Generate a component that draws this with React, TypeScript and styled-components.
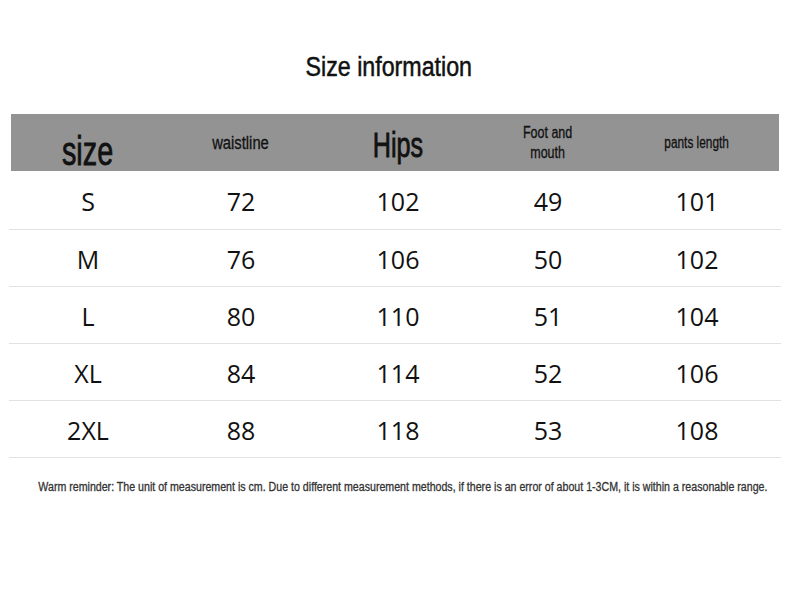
import styled, { createGlobalStyle } from "styled-components";

const GlobalStyle = createGlobalStyle`
  html, body {
    margin: 0;
    padding: 0;
    background: #ffffff;
  }
`;

const sans = `"Liberation Sans", Arial, sans-serif`;
const cols = "154px 152px 162px 138px 160px";

type Row = { size: string; waist: number; hips: number; foot: number; length: number };

const rows: Row[] = [
  { size: "S", waist: 72, hips: 102, foot: 49, length: 101 },
  { size: "M", waist: 76, hips: 106, foot: 50, length: 102 },
  { size: "L", waist: 80, hips: 110, foot: 51, length: 104 },
  { size: "XL", waist: 84, hips: 114, foot: 52, length: 106 },
  { size: "2XL", waist: 88, hips: 118, foot: 53, length: 108 },
];

const App = () => {
  return (
    <Page>
      <GlobalStyle />
      <TitleBar>
        <Narrow $scale={0.86}>Size information</Narrow>
      </TitleBar>
      <Table>
        <HeadRow>
          <HeadCell $size={40} $offset={8} $bold>
            <Narrow $scale={0.72}>size</Narrow>
          </HeadCell>
          <HeadCell $size={18}>
            <Narrow $scale={0.82}>waistline</Narrow>
          </HeadCell>
          <HeadCell $size={35} $offset={2} $bold>
            <Narrow $scale={0.72}>Hips</Narrow>
          </HeadCell>
          <HeadCell $size={16} $lines>
            <Narrow $scale={0.78}>
              Foot and
              <br />
              mouth
            </Narrow>
          </HeadCell>
          <HeadCell $size={16}>
            <Narrow $scale={0.74}>pants length</Narrow>
          </HeadCell>
        </HeadRow>
        {rows.map((row, i) => (
          <BodyRow key={row.size} $first={i === 0}>
            <Cell>{row.size}</Cell>
            <Cell>{row.waist}</Cell>
            <Cell>{row.hips}</Cell>
            <Cell>{row.foot}</Cell>
            <Cell>{row.length}</Cell>
          </BodyRow>
        ))}
      </Table>
      <Reminder>
        <Narrow $scale={0.85}>
          Warm reminder: The unit of measurement is cm. Due to different measurement methods, if there is an error of
          about 1-3CM, it is within a reasonable range.
        </Narrow>
      </Reminder>
    </Page>
  );
};

export default App;

const Page = styled.div`
  width: 790px;
  height: 593px;
  display: flex;
  flex-direction: column;
  align-items: center;
  background: #fff;
  overflow: hidden;
`;

const Narrow = styled.span<{ $scale: number }>`
  display: inline-block;
  flex: none;
  white-space: nowrap;
  transform: scaleX(${(p) => p.$scale});
  transform-origin: center;
`;

const TitleBar = styled.h1`
  margin: 0;
  height: 114px;
  width: 100%;
  padding: 50px 12px 0 0;
  box-sizing: border-box;
  text-align: center;
  font-family: ${sans};
  font-weight: 400;
  font-size: 27px;
  line-height: 34px;
  color: #111;
  -webkit-text-stroke: 0.5px #111;
`;

const Table = styled.div`
  width: 768px;
  display: flex;
  flex-direction: column;
`;

const HeadRow = styled.div`
  display: grid;
  grid-template-columns: ${cols};
  height: 57px;
  background: #939393;
  align-items: center;
`;

const HeadCell = styled.div<{ $size: number; $offset?: number; $lines?: boolean; $bold?: boolean }>`
  text-align: center;
  font-family: ${sans};
  font-size: ${(p) => p.$size}px;
  line-height: ${(p) => (p.$lines ? "20px" : "1")};
  color: #111;
  -webkit-text-stroke: ${(p) => (p.$bold ? "0.8px #111" : "0.3px #111")};
  transform: translateY(${(p) => p.$offset ?? 0}px);
`;

const BodyRow = styled.div<{ $first?: boolean }>`
  display: grid;
  grid-template-columns: ${cols};
  height: ${(p) => (p.$first ? 59 : 57)}px;
  align-items: center;
  border-bottom: 1px solid #e2e2e2;
  box-sizing: border-box;
  margin: 0 -2px 0 -2px;
  padding-left: 2px;
`;

const Cell = styled.div`
  text-align: center;
  font-family: "Open Sans", "Liberation Sans", sans-serif;
  font-size: 25px;
  color: #111;
  padding-top: 2px;
`;

const Reminder = styled.div`
  margin: 22px 0 0;
  width: 100%;
  display: flex;
  justify-content: center;
  padding-left: 15px;
  box-sizing: border-box;
  font-family: ${sans};
  font-size: 12.5px;
  line-height: 14px;
  color: #333;
  -webkit-text-stroke: 0.3px #333;
`;
